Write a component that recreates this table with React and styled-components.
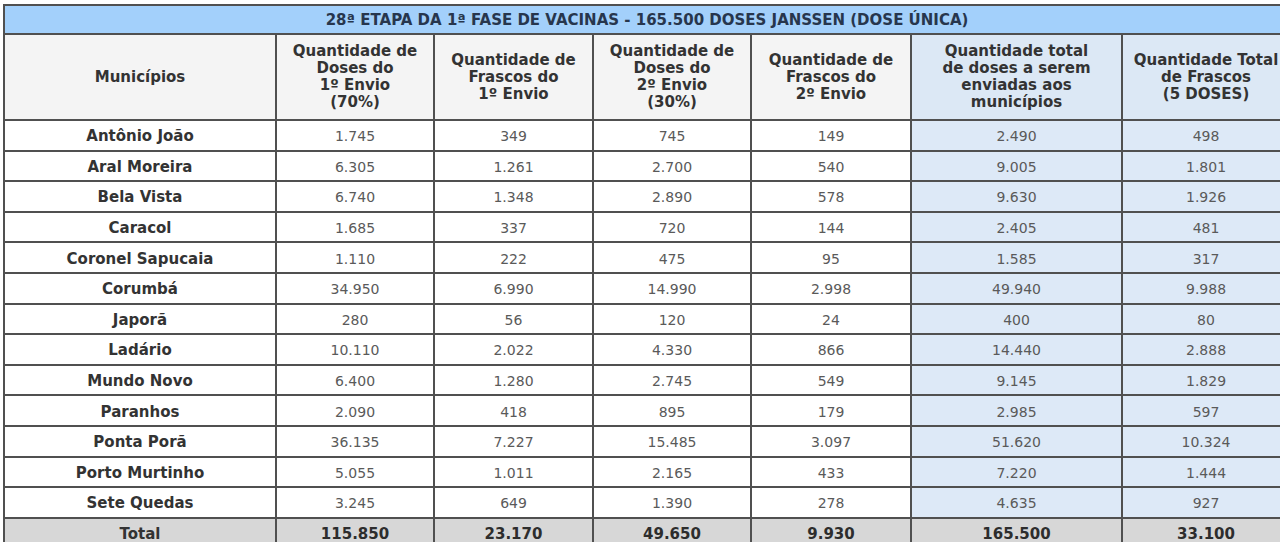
import styled, { createGlobalStyle } from "styled-components";

const Global = createGlobalStyle`
  html, body {
    margin: 0;
    padding: 0;
    background: #fff;
    overflow: hidden;
  }
  body {
    font-family: "DejaVu Sans", Verdana, sans-serif;
  }
`;

const Page = styled.div`
  padding: 4px 0 0 3px;
  width: 1290px;
`;

const Table = styled.table`
  border-collapse: collapse;
  table-layout: fixed;
  width: 1286px;
  font-size: 14px;
  color: #555;
  border: 2px solid #505050;
`;

const Title = styled.th`
  background: #a3d0fb;
  color: #27364d;
  font-size: 15px;
  font-weight: bold;
  height: 27px;
  padding: 0;
  border: 2px solid #505050;
  text-align: center;
`;

const Head = styled.th`
  background: ${(p) => (p.$blue ? "#dce8f5" : "#f4f4f4")};
  color: #333;
  font-size: 15px;
  font-weight: bold;
  line-height: 17px;
  height: 84px;
  padding: 0 2px;
  border: 2px solid #505050;
  text-align: center;
  vertical-align: middle;
`;

const Cell = styled.td`
  background: ${(p) =>
    p.$total ? "#d7d7d7" : p.$blue ? "#dde9f7" : "#fff"};
  color: ${(p) => (p.$total ? "#2d2d2d" : "#5a5a5a")};
  font-size: ${(p) => (p.$total ? "15px" : "14px")};
  font-weight: ${(p) => (p.$total ? "bold" : "normal")};
  height: 26.6px;
  padding: 2px 0 0;
  border: 2px solid #505050;
  text-align: center;
  vertical-align: middle;
`;

const Name = styled(Cell)`
  font-size: 15px;
  font-weight: bold;
  color: #333;
`;

const widths = [272, 158, 159, 158, 160, 211, 168];

const rows = [
  ["Antônio João", "1.745", "349", "745", "149", "2.490", "498"],
  ["Aral Moreira", "6.305", "1.261", "2.700", "540", "9.005", "1.801"],
  ["Bela Vista", "6.740", "1.348", "2.890", "578", "9.630", "1.926"],
  ["Caracol", "1.685", "337", "720", "144", "2.405", "481"],
  ["Coronel Sapucaia", "1.110", "222", "475", "95", "1.585", "317"],
  ["Corumbá", "34.950", "6.990", "14.990", "2.998", "49.940", "9.988"],
  ["Japorã", "280", "56", "120", "24", "400", "80"],
  ["Ladário", "10.110", "2.022", "4.330", "866", "14.440", "2.888"],
  ["Mundo Novo", "6.400", "1.280", "2.745", "549", "9.145", "1.829"],
  ["Paranhos", "2.090", "418", "895", "179", "2.985", "597"],
  ["Ponta Porã", "36.135", "7.227", "15.485", "3.097", "51.620", "10.324"],
  ["Porto Murtinho", "5.055", "1.011", "2.165", "433", "7.220", "1.444"],
  ["Sete Quedas", "3.245", "649", "1.390", "278", "4.635", "927"],
];

const total = ["Total", "115.850", "23.170", "49.650", "9.930", "165.500", "33.100"];

const headers = [
  ["Municípios"],
  ["Quantidade de", "Doses do", "1º Envio", "(70%)"],
  ["Quantidade de", "Frascos do", "1º Envio"],
  ["Quantidade de", "Doses do", "2º Envio", "(30%)"],
  ["Quantidade de", "Frascos do", "2º Envio"],
  ["Quantidade total", "de doses a serem", "enviadas aos", "municípios"],
  ["Quantidade Total", "de Frascos", "(5 DOSES)"],
];

export default function App() {
  return (
    <Page>
      <Global />
      <Table>
        <colgroup>
          {widths.map((w, i) => (
            <col key={i} style={{ width: w }} />
          ))}
        </colgroup>
        <thead>
          <tr>
            <Title colSpan={7}>
              28ª ETAPA DA 1ª FASE DE VACINAS - 165.500 DOSES JANSSEN (DOSE ÚNICA)
            </Title>
          </tr>
          <tr>
            {headers.map((h, i) => (
              <Head key={i} $blue={i >= 5}>
                {h.map((line, j) => (
                  <div key={j}>{line}</div>
                ))}
              </Head>
            ))}
          </tr>
        </thead>
        <tbody>
          {rows.map((r) => (
            <tr key={r[0]}>
              <Name>{r[0]}</Name>
              {r.slice(1).map((v, i) => (
                <Cell key={i} $blue={i >= 4}>
                  {v}
                </Cell>
              ))}
            </tr>
          ))}
          <tr>
            <Name $total>{total[0]}</Name>
            {total.slice(1).map((v, i) => (
              <Cell key={i} $total>
                {v}
              </Cell>
            ))}
          </tr>
        </tbody>
      </Table>
    </Page>
  );
}
